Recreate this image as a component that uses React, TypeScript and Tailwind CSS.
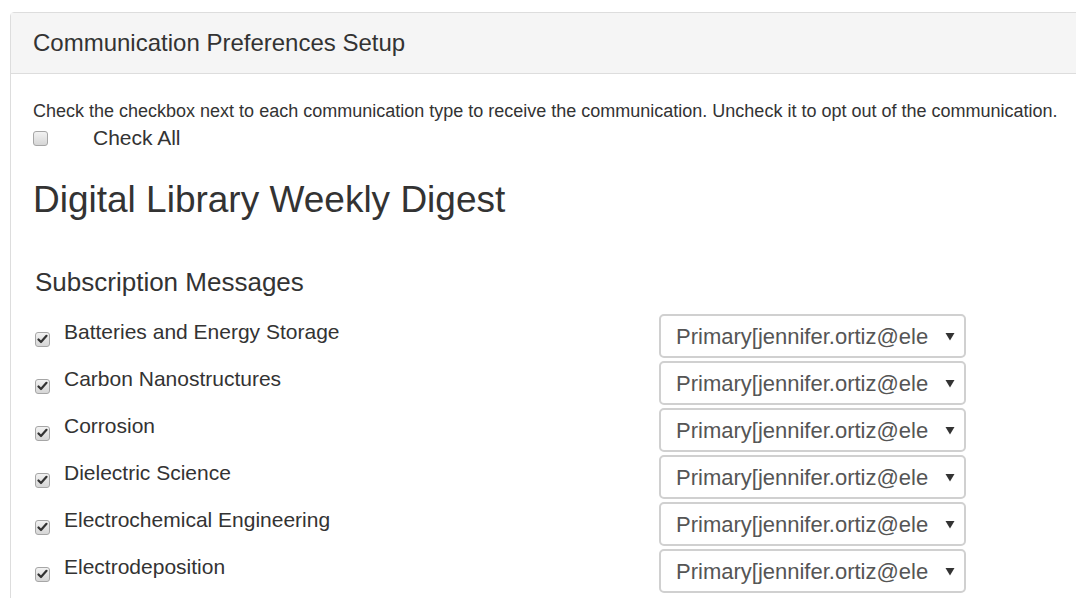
import React from 'react';

const topics = [
  'Batteries and Energy Storage',
  'Carbon Nanostructures',
  'Corrosion',
  'Dielectric Science',
  'Electrochemical Engineering',
  'Electrodeposition',
];

const Box = ({ checked }: { checked: boolean }) => (
  <span className="inline-flex h-[15px] w-[15px] shrink-0 items-center justify-center rounded-[3px] border border-[#a6a6a6] bg-gradient-to-b from-[#f2f2f2] to-[#d6d6d6]">
    {checked && (
      <svg width="11" height="10" viewBox="0 0 11 10">
        <path d="M1.5 5.5 L4 8 L9.5 1.8" fill="none" stroke="#333" strokeWidth="2.2" strokeLinecap="round" strokeLinejoin="round" />
      </svg>
    )}
  </span>
);

const Select = () => (
  <div className="flex h-[44px] w-[307px] items-center justify-between rounded-[5px] border-2 border-[#d0d0d0] bg-white pl-[15px] pr-[9px] text-[22px] text-[#555]">
    <span className="whitespace-nowrap">Primary[jennifer.ortiz@ele</span>
    <svg width="10" height="9" viewBox="0 0 10 9">
      <path d="M0.5 1 L9.5 1 L5 8.5 Z" fill="#333" />
    </svg>
  </div>
);

export default function App() {
  return (
    <div className="h-[598px] overflow-hidden bg-white pl-[10px] pt-[12px] text-[#333]" style={{ fontFamily: '"Liberation Sans", Arial, sans-serif' }}>
      <div className="w-[1100px] rounded-tl-[4px] border border-[#ddd]">
        <div className="flex h-[61px] items-center border-b border-[#ddd] bg-[#f5f5f5] px-[22px] text-[24px]">
          Communication Preferences Setup
        </div>
        <div className="px-[22px] pb-[60px] pt-[27px]">
          <p className="text-[18px] leading-[20px]">
            Check the checkbox next to each communication type to receive the communication. Uncheck it to opt out of the communication.
          </p>
          <div className="mt-[5px] flex h-[24px] items-center">
            <Box checked={false} />
            <span className="ml-[45px] text-[21px]">Check All</span>
          </div>
          <h1 className="mt-[28px] text-[37px] leading-[44px]">Digital Library Weekly Digest</h1>
          <h2 className="mt-[44px] pl-[2px] text-[26px] leading-[32px]">Subscription Messages</h2>
          <div className="mt-[16px] flex flex-col">
            {topics.map((t) => (
              <div key={t} className="flex h-[47px] items-start">
                <div className="flex w-[626px] items-start">
                  <span className="ml-[2px] mt-[13px]">
                    <Box checked={true} />
                  </span>
                  <span className="ml-[14px] mt-[5px] text-[21px] leading-[26px]">{t}</span>
                </div>
                <Select />
              </div>
            ))}
          </div>
        </div>
      </div>
    </div>
  );
}
